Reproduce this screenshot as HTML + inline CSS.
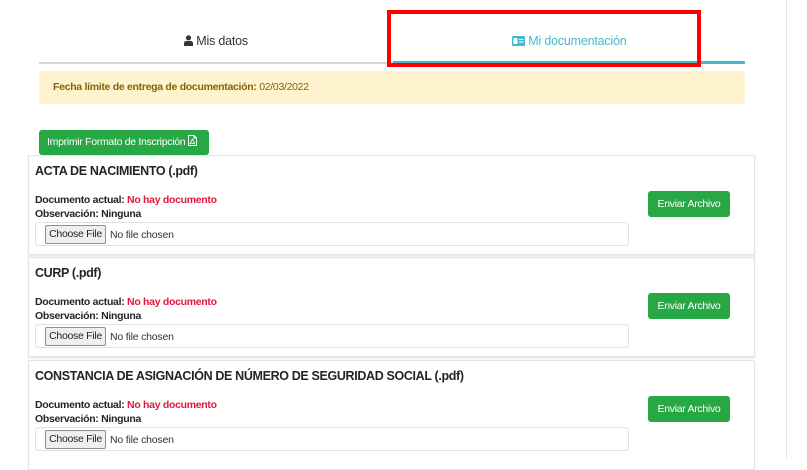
<!DOCTYPE html><html><head><meta charset="utf-8"><style>
*{box-sizing:border-box;margin:0;padding:0}
body{width:807px;height:458px;overflow:hidden;background:#fff;font-family:"Liberation Sans",sans-serif;position:relative;color:#212529}
.a{position:absolute;white-space:nowrap}
.vr{left:786px;top:0;width:1px;height:458px;background:#e2e2e2}
.tab{top:34px;font-size:12.5px;letter-spacing:-0.2px}
.card{left:28px;width:727px;height:100px;border:1px solid #e4e4e4;box-shadow:0 2px 2px rgba(0,0,0,.08);background:#fff}
.t{left:6px;top:8px;font-weight:bold;font-size:12.5px;letter-spacing:-0.35px}
.d{left:6px;font-size:10.5px;font-weight:bold;letter-spacing:-0.3px}
.r{color:#e3173d}
.f{left:6px;top:66px;width:594px;height:24px;border:1px solid #dfe2e6;border-radius:3px}
.cb{position:absolute;left:9px;top:2px;height:19px;width:61px;border:1px solid #8f8f8f;background:#efefef;font-size:10.5px;letter-spacing:-0.3px;text-align:center;line-height:17px;border-radius:2px}
.nf{position:absolute;left:74px;top:6px;font-size:10.5px;color:#333;letter-spacing:-0.2px}
.btn{left:619px;top:35px;width:82px;height:26px;background:#28a745;border-radius:3px;color:#fff;font-size:10.5px;text-align:center;line-height:26px;letter-spacing:-0.3px}
</style></head><body>
<div class="a vr"></div>
<div class="a" style="left:39px;top:62px;width:706px;height:2px;background:#d6d6d6"></div>
<div class="a" style="left:393px;top:61px;width:352px;height:3px;background:#45b8d0"></div>
<div class="a tab" style="left:184px;color:#333"><svg width="9" height="11" viewBox="0 0 9 11" style="vertical-align:-1px"><circle cx="4.5" cy="2.8" r="2.6" fill="#333"/><path d="M0 11V8.5Q0 6 2.5 6H6.5Q9 6 9 8.5V11Z" fill="#333"/></svg> Mis datos</div>
<div class="a tab" style="left:512px;color:#45b8d0"><svg width="13" height="10" viewBox="0 0 13 10" style="vertical-align:-1px"><rect width="13" height="10" rx="1" fill="#45b8d0"/><rect x="1.5" y="2" width="4" height="6" fill="#fff"/><rect x="7" y="3" width="4.5" height="1" fill="#fff"/><rect x="7" y="5.5" width="4.5" height="1" fill="#fff"/></svg> Mi documentación</div>
<div class="a" style="left:387px;top:10px;width:314px;height:57px;border:4px solid #f00"></div>
<div class="a" style="left:39px;top:71px;width:706px;height:33px;background:#fff3cd;border-radius:3px"></div>
<div class="a" style="left:53px;top:81px;font-size:10.5px;color:#856404;letter-spacing:-0.3px"><b>Fecha límite de entrega de documentación:</b> 02/03/2022</div>
<div class="a" style="left:39px;top:130px;width:170px;height:25px;background:#28a745;border-radius:3px;color:#fff;font-size:10.5px;line-height:25px;padding-left:8px;letter-spacing:-0.3px">Imprimir Formato de Inscripción <svg width="9" height="11" viewBox="0 0 9 11" style="vertical-align:-1px"><path d="M.5.5H6L8.5 3V10.5H.5Z M6 .5V3H8.5" fill="none" stroke="#fff"/><path d="M2 8.5L4.5 4L6.5 8.5Z" fill="none" stroke="#fff" stroke-width=".8"/></svg></div>

<div class="a card" style="top:155px">
<div class="a t">ACTA DE NACIMIENTO (.pdf)</div>
<div class="a d" style="top:38px">Documento actual: <span class="r">No hay documento</span></div>
<div class="a d" style="top:52px">Observación: Ninguna</div>
<div class="a f"><div class="cb">Choose File</div><div class="nf">No file chosen</div></div>
<div class="a btn">Enviar Archivo</div></div>

<div class="a card" style="top:257px">
<div class="a t">CURP (.pdf)</div>
<div class="a d" style="top:38px">Documento actual: <span class="r">No hay documento</span></div>
<div class="a d" style="top:52px">Observación: Ninguna</div>
<div class="a f"><div class="cb">Choose File</div><div class="nf">No file chosen</div></div>
<div class="a btn">Enviar Archivo</div></div>

<div class="a card" style="top:360px;height:110px">
<div class="a t">CONSTANCIA DE ASIGNACIÓN DE NÚMERO DE SEGURIDAD SOCIAL (.pdf)</div>
<div class="a d" style="top:38px">Documento actual: <span class="r">No hay documento</span></div>
<div class="a d" style="top:52px">Observación: Ninguna</div>
<div class="a f"><div class="cb">Choose File</div><div class="nf">No file chosen</div></div>
<div class="a btn">Enviar Archivo</div></div>
</body></html>
